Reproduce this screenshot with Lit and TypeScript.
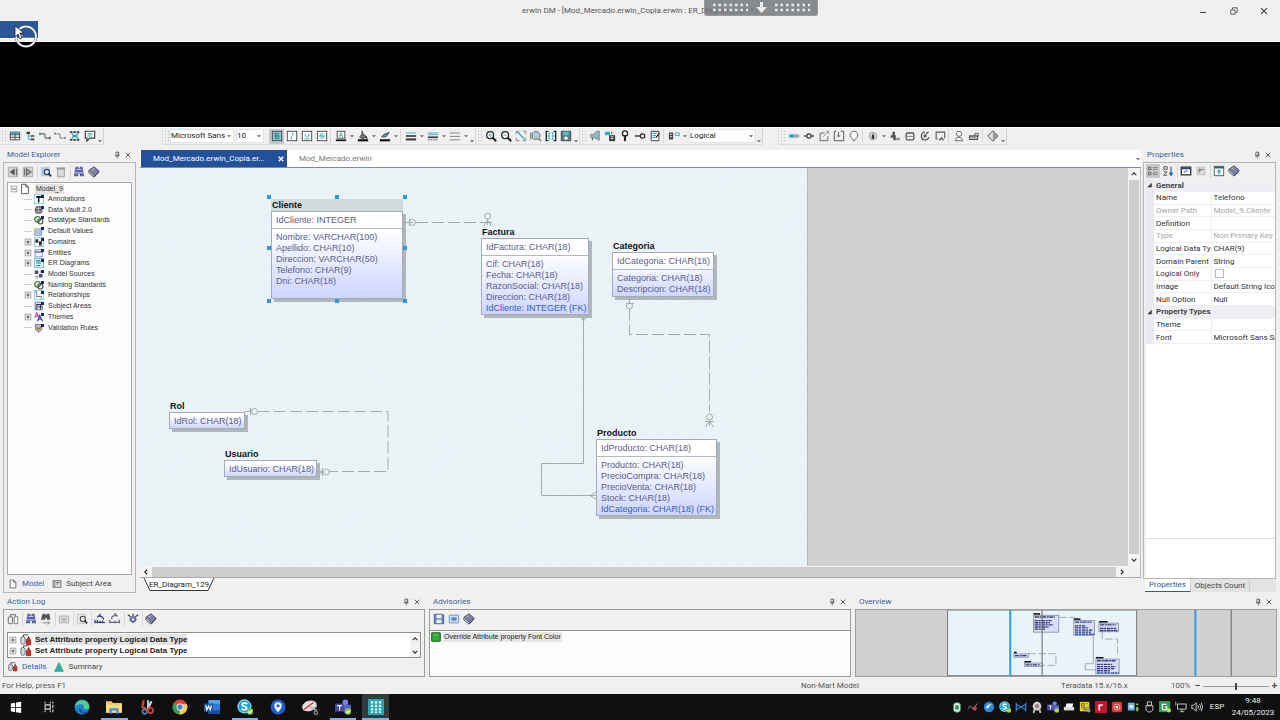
import { LitElement, html, css, svg, nothing } from "lit";
import { customElement, property } from "lit/decorators.js";

const K = "#3b3d40";
const T = "#35a9b5";
const N = "#33417f";

/* Every glyph is drawn on a 14 x 14 grid. */
const glyphs: Record<string, unknown> = {
  table: svg`<path d="M1.5 2.5h11v9h-11zM1 5.5h12M1 8.5h12M7 3v8" fill="none" stroke=${K}/><path d="M2 3h10v2H2z" fill=${T}/>`,
  hier: svg`<path d="M3 2h4v3H3zM8 6h4v2H8zM8 10h4v2H8z" fill=${K}/><path d="M5 5v6h3M5 7h3" fill="none" stroke=${T}/>`,
  link: svg`<path d="M1 3v3M1 4.500h6v5h6M13 8v3M11 9.500l2-1.500" fill="none" stroke=${K}/><path d="M2 4.500h3" stroke=${T}/>`,
  linkdash: svg`<path d="M1 3v3M1 4.500h6v5h6M13 8v3" fill="none" stroke=${K} stroke-dasharray="2 1"/>`,
  many: svg`<path d="M1 2.500h12M1 11.500h12" stroke=${K} stroke-width="2" stroke-dasharray="3 1"/><path d="M3 4l8 6M11 4l-8 6M4 7h6" stroke=${T} stroke-width="1.500"/>`,
  note: svg`<path d="M1.500 1.500h11v8h-6l-3 3.500v-3.500h-2z" fill="#fff" stroke=${K} stroke-width="1.300"/><path d="M4 4.500h6M4 7h5" stroke=${T} stroke-width="1.300"/>`,
  bold: svg`<rect x="1.500" y="1.500" width="11" height="11" fill="#8fc3c9" stroke=${K}/><path d="M5 4v6h3a1.500 1.500 0 0 0 0-3H5h2.500a1.500 1.500 0 0 0 0-3z" fill="none" stroke="#15717c"/>`,
  italic: svg`<rect x="1.500" y="1.500" width="11" height="11" fill="#fff" stroke=${K}/><path d="M7 4h2M5 10h2M8 4l-2 6" stroke=${T} fill="none"/>`,
  under: svg`<rect x="1.500" y="1.500" width="11" height="11" fill="#fff" stroke=${K}/><path d="M5 4v3q2 3 4 0V4M4 10.500h6" stroke=${T} fill="none"/>`,
  strike: svg`<rect x="1.500" y="1.500" width="11" height="11" fill="#fff" stroke=${K}/><path d="M9 4.500H5.500v2.500h3v2.500H5M3 7h8" stroke=${T} fill="none"/>`,
  fontcol: svg`<rect x="2.500" y="1.500" width="9" height="8" fill="#fff" stroke=${K}/><path d="M5 8l2-5 2 5M6 6.500h2" fill="none" stroke=${T}/><path d="M1 12h12" stroke="#111" stroke-width="2"/>`,
  fill: svg`<path d="M3 8l4-4 4 4-3 2H5z" fill="#777" stroke=${K}/><path d="M6 1v5M10 7l2 3" stroke=${K} stroke-width="1.500"/><path d="M1 12h12" stroke="#111" stroke-width="2.500"/>`,
  pen: svg`<path d="M3 8l3-3 6-2-4 5z" fill=${T} stroke=${K}/><path d="M1 12h12" stroke="#111" stroke-width="2.500"/>`,
  lines1: svg`<path d="M1 3.500h12" stroke=${T}/><path d="M1 7h12" stroke=${K} stroke-width="2"/><path d="M1 11h12" stroke=${K} stroke-width="2.500"/>`,
  lines2: svg`<path d="M1 3.500h12M1 5.500h12" stroke=${T}/><path d="M1 8.500h12" stroke=${K} stroke-width="2"/><path d="M1 11.500h12" stroke=${K} stroke-dasharray="2 1"/>`,
  lines3: svg`<path d="M1 3.500h12M1 7.500h12M1 11.500h12" stroke="#777"/>`,
  zoomin: svg`<circle cx="6" cy="6" r="4" fill="#fff" stroke="#222" stroke-width="1.500"/><path d="M4 6h4M6 4v4" stroke=${T}/><path d="M9 9l4 4" stroke="#222" stroke-width="2.500"/>`,
  zoomout: svg`<circle cx="6" cy="6" r="4" fill="#fff" stroke="#222" stroke-width="1.500"/><path d="M4 6h4" stroke=${T}/><path d="M9 9l4 4" stroke="#222" stroke-width="2.500"/>`,
  fit: svg`<path d="M1.500 5V1.500H5M9 1.500h3.500V5M12.500 9v3.500H9M5 12.500H1.500V9" fill="none" stroke="#777"/><path d="M3 2l8 9" stroke=${T} stroke-width="1.500"/>`,
  zoomsel: svg`<circle cx="7" cy="6.500" r="4.500" fill="#d9ecef" stroke="#777" stroke-width="1.500"/><circle cx="7" cy="6.500" r="2" fill="none" stroke=${T}/><path d="M10 10l3 3M1 3v8" stroke="#777" stroke-width="1.500"/>`,
  extent: svg`<path d="M4 1.500H1.500v11H4M10 1.500h2.500v11H10" fill="none" stroke="#222" stroke-width="1.500"/><path d="M4 4h2M8 4h2M3 7h3M8 7h3M4 10h2M8 10h2" stroke=${T} stroke-width="2"/>`,
  disk: svg`<path d="M1.500 1.500h11v11h-11z" fill="#5b7f89" stroke=${K}/><path d="M4 2h6v4H4z" fill="#5cc0cb"/><circle cx="7" cy="9.500" r="2" fill="#fff"/>`,
  horn: svg`<path d="M8 2l4-1v11L6 9H2V5h4z" fill="#8bb7bd" stroke="#888"/><path d="M4 9v3" stroke=${K}/>`,
  tables: svg`<path d="M1 2h6v4H1z" fill=${T}/><path d="M6 6h7v7H6z" fill=${K}/><path d="M8 8h3M8 10h3" stroke="#fff"/><path d="M9 2v3" stroke=${K}/>`,
  key: svg`<circle cx="7" cy="4" r="3" fill="#fff" stroke="#222" stroke-width="1.500"/><path d="M7 6v7" stroke="#222" stroke-width="2.500"/>`,
  keyh: svg`<path d="M1 7h8" stroke="#222" stroke-width="1.500"/><circle cx="10" cy="7" r="2.500" fill="#fff" stroke="#222" stroke-width="1.500"/>`,
  edit: svg`<path d="M2.500 1.500h9v11h-9z" fill="#fff" stroke="#222"/><path d="M4 4h5M4 6.500h4M4 9h3" stroke=${T} stroke-width="1.500"/><path d="M8 9l4-5" stroke="#222" stroke-width="1.500"/>`,
  model: svg`<path d="M1 3h5v8H1z" fill=${K}/><path d="M2 5h3M2 8h3" stroke="#fff"/><path d="M8.500 3.500h5v3h-5z" fill="#fff" stroke=${T}/>`,
  dots: svg`<rect x="1" y="5" width="7" height="4" rx="2" fill=${T}/><rect x="7.500" y="5.500" width="5" height="3" rx="1.500" fill="#bbb" stroke="#888"/>`,
  conn: svg`<path d="M1 7h12" stroke=${K} stroke-width="1.500"/><circle cx="7" cy="7" r="2.500" fill="#fff" stroke=${K} stroke-width="1.500"/>`,
  out: svg`<path d="M8 3.500H2.500v9h9V7" fill="none" stroke="#555"/><path d="M6 8l6-6M9 1.500h3.500V5" fill="none" stroke="#888"/>`,
  inn: svg`<path d="M4 1.500H1.500v11h11v-11H9" fill="none" stroke="#444"/><path d="M6.500 2v6M4.500 6l2 2 2-2" fill="none" stroke="#555"/>`,
  balloon: svg`<path d="M5 10a4.500 4.500 0 1 1 4 0l-2 3z" fill="#fff" stroke="#555"/>`,
  globe: svg`<circle cx="7" cy="7" r="4.500" fill="#ddd" stroke="#999"/><path d="M7 4v4M6 6h2v4H6z" stroke="#444"/>`,
  person: svg`<path d="M4 2h3v4H4zM2 6h6v6H5V9H2z" fill="#555"/><path d="M8 9h5v3H8z" fill="#999"/>`,
  db: svg`<rect x="2.500" y="3.500" width="9" height="8" rx="2" fill="#eee" stroke="#555" stroke-width="1.500"/><path d="M3 7.500h8" stroke="#777"/>`,
  cycle: svg`<path d="M7 2.500a4.500 4.500 0 1 0 4.500 6M8 5l3-3M5 7h4M7 5v4" fill="none" stroke="#555" stroke-width="1.500"/>`,
  screen: svg`<path d="M4 10.500H2.500v-8h10v7" fill="none" stroke="#555" stroke-width="1.300"/><path d="M6 12l3-3 2 3" fill="none" stroke="#555" stroke-width="1.500"/>`,
  user: svg`<circle cx="7" cy="4.500" r="3" fill="#fff" stroke="#555"/><path d="M2.500 12.500q1-4 4.500-4t4.500 4z" fill="#fff" stroke="#555"/>`,
  lock: svg`<path d="M2 7h9v4H2z" fill="#fff" stroke="#555" stroke-width="1.500"/><path d="M8 7V4h4v4M4 9h5" fill="none" stroke="#555"/>`,
  diamond: svg`<path d="M7 1l6 6-6 6-6-6z" fill="#ddd" stroke="#444"/><path d="M7 2v10l5-5z" fill="#999"/>`,
  back: svg`<path d="M1.500 1.500h11v11h-11z" fill="#d6d6d6" stroke="#aaa"/><path d="M9 3v8L3 7z" fill="#555"/><path d="M11 3v8" stroke="#555"/>`,
  fwd: svg`<path d="M1.500 1.500h11v11h-11z" fill="#d6d6d6" stroke="#aaa"/><path d="M5 3v8l6-4z" fill="#999" stroke="#555"/><path d="M3 3v8" stroke="#555"/>`,
  find: svg`<path d="M1 1h10v11H1z" fill="#b9cde8"/><circle cx="8" cy="7" r="3" fill="#e4f0fb" stroke=${N} stroke-width="1.500"/><path d="M10 9l3 3" stroke="#222" stroke-width="2"/>`,
  findgray: svg`<path d="M1.500 1.500h9v11h-9z" fill="#eee" stroke="#bbb"/><circle cx="8" cy="7" r="3" fill="#fff" stroke="#555" stroke-width="1.500"/><path d="M10 9l3 3" stroke="#333" stroke-width="2"/>`,
  trash: svg`<path d="M3 3.500h8v9H3z" fill="#d9d9d9" stroke="#999"/><path d="M2 2.500h10" stroke="#888" stroke-width="1.500"/>`,
  binoc: svg`<path d="M3 1h3l1 3 1-3h3l2 11H8V9H6v3H1z" fill="#5a62a0"/><path d="M2 8h10M4 4h6" stroke="#dfe2f5"/>`,
  book: svg`<path d="M1 5l6-4 6 5-5 6z" fill="#7c7fae" stroke="#3b3d70"/><path d="M1 6v2l6 5 6-6" fill="none" stroke="#333"/><path d="M4 5l3-2" stroke="#c9b36a" stroke-width="1.500"/>`,
  page: svg`<path d="M3 1.500h5l3 3v8H3z" fill="#fff" stroke="#444"/><path d="M8 1.500v3h3" fill="none" stroke="#444"/>`,
  area: svg`<rect x="1.500" y="2.500" width="11" height="9" fill="#dfe3ea" stroke="#444"/><path d="M4 3v8M6 5h5M6 7h3" stroke="#445" />`,
  copy: svg`<rect x="1.500" y="4.500" width="5" height="8" rx="1" fill="#eee" stroke="#555"/><rect x="8.500" y="4.500" width="4" height="8" fill="#fff" stroke="#777"/><path d="M4 4V2h6v2" fill="none" stroke="#555"/>`,
  binocx: svg`<path d="M3 1h3l1 2 1-2h3l1 7H8V6H6v2H1z" fill="#555"/><path d="M3 11.500h8M9 9.500l2 2-2 2" fill="none" stroke="#777"/>`,
  gbox: svg`<rect x="1.500" y="3.500" width="11" height="8" fill="#ddd" stroke="#aaa"/><path d="M4 7h6M5 9h4" stroke="#999"/>`,
  undo: svg`<path d="M4 5l3-3v2q4 0 4 4M1 8v4M4 8v4M7 9v3M10 9v3M1 11h12" fill="none" stroke=${N} stroke-width="1.500"/>`,
  redo: svg`<path d="M10 4L7 1v2q-4 0-4 4M1 8v4M12 8v4M7 9v3M1 11h12" fill="none" stroke="#667" stroke-width="1.500"/>`,
  spider: svg`<path d="M1 2l4 3M7 1v4M13 2L9 5" stroke="#444" stroke-width="1.500"/><path d="M3 6l4-2 4 2v3l-4 3-4-3z" fill="#5b62a5"/><circle cx="7" cy="7.500" r="1.500" fill="#fff"/>`,
  save: svg`<path d="M1.500 1.500h10l1 1v10h-11z" fill="#6d88b5" stroke="#41578a"/><path d="M4 2h6v4H4zM4 8h6v4H4z" fill="#e8eef8"/>`,
  photo: svg`<rect x="1.500" y="2.500" width="11" height="9" rx="1" fill="#cfe4f7" stroke="#5a86bb"/><path d="M4 5h6v4H4z" fill="#5a86bb"/>`,
  cats: svg`<path d="M1.500 2.500h3v3h-3zM1.500 8.500h3v3h-3z" fill="none" stroke="#555"/><path d="M7 3h6M7 5h6M7 9h6M7 11h6" stroke="#555" stroke-dasharray="2 1"/>`,
  az: svg`<path d="M2 2h4v3H2zM2 8h4L2 12h4" fill="none" stroke="#444"/><path d="M10.500 2v9M8.500 9l2 3 2-3" fill="none" stroke="#2d6aa8" stroke-width="1.500"/>`,
  win: svg`<rect x="1.500" y="2.500" width="11" height="9" fill="#fff" stroke="#234" stroke-width="1.500"/><path d="M2 4h10" stroke=${N} stroke-width="2"/><path d="M5 9q0-3 4-2" stroke=${N} fill="none"/>`,
  wingray: svg`<rect x="2.500" y="2.500" width="9" height="9" fill="#ddd" stroke="#bbb"/><path d="M5 9q0-4 5-4M6 4l-2 3" stroke="#888" fill="none" stroke-width="1.500"/>`,
  winup: svg`<rect x="1.500" y="1.500" width="11" height="11" fill="#fff" stroke="#355"/><path d="M2 3h10" stroke="#355" stroke-width="2"/><path d="M7 11V6M5 8l2-2 2 2" stroke=${T} fill="none" stroke-width="1.500"/>`,
  pin: svg`<path d="M5 2h5v6H5zM9 2v6M3.500 8.500h8M7.500 9v4" fill="none" stroke="#444" stroke-width="1.200"/>`,
  close: svg`<path d="M3 3l8 8M11 3l-8 8" stroke="#444" stroke-width="1.500"/>`,
  closew: svg`<path d="M3 3l8 8M11 3l-8 8" stroke="#fff" stroke-width="2.500"/>`,
  up: svg`<path d="M3 9l4-4 4 4" fill="none" stroke="#333" stroke-width="2.200"/>`,
  down: svg`<path d="M3 5l4 4 4-4" fill="none" stroke="#333" stroke-width="2.200"/>`,
  left: svg`<path d="M9 3L5 7l4 4" fill="none" stroke="#333" stroke-width="2.200"/>`,
  right: svg`<path d="M5 3l4 4-4 4" fill="none" stroke="#333" stroke-width="2.200"/>`,
  caret: svg`<path d="M2 5h10L7 10z" fill="#666"/>`,
  plus: svg`<rect x="2" y="2" width="10" height="10" fill="#fff" stroke="#999" stroke-width="1.500"/><path d="M4 7h6M7 4v6" stroke="#333" stroke-width="1.500"/>`,
  minus: svg`<rect x="2" y="2" width="10" height="10" fill="#fff" stroke="#999" stroke-width="1.500"/><path d="M4 7h6" stroke="#333" stroke-width="1.500"/>`,
  tri: svg`<path d="M11 2v10H1z" fill="#333"/>`,
  log: svg`<rect x="1" y="3" width="5" height="9" rx="2" fill="#cfdbe8" stroke="#555"/><path d="M7 6h6v7H7z" fill="#b8322f"/><path d="M8 6l2-4 2 4z" fill="#8f2624"/><path d="M4 3V1h6" stroke="#333" fill="none"/>`,
  peak: svg`<path d="M7 1l6 12H1z" fill="#2fb9a4" stroke="#27897b"/>`,
  green: svg`<rect x="1" y="1" width="12" height="12" rx="1" fill="#2fae3b" stroke="#1b5f22" stroke-width="1.500"/><path d="M3 4h6" stroke="#8be08f"/>`,
  min: svg`<path d="M3 9h8" stroke="#333" stroke-width="1.500"/>`,
  restore: svg`<path d="M2.500 5.500h6v6h-6zM5 5V2.500h6.500V9H9" fill="none" stroke="#333"/>`,
  /* model tree */
  tText: svg`<rect x=".5" y=".5" width="13" height="13" fill="#fff" stroke="#5cc2e0"/><path d="M3 4h7M6.500 4v8" stroke="#111" stroke-width="2.200"/>`,
  tVault: svg`<circle cx="6.500" cy="7" r="5.500" fill="#666"/><path d="M3 5h7M3 9h7M6 2v10" stroke="#ccc"/>`,
  tChain: svg`<circle cx="5" cy="6" r="4" fill="#cfe3c8" stroke="#3f7a3d" stroke-width="1.500"/><circle cx="9" cy="9" r="3.500" fill="none" stroke="#444" stroke-width="1.500"/>`,
  tDef: svg`<rect x="1" y="4" width="10" height="9" fill="#a9c4ea" stroke="#6f8fc4"/><path d="M1 3h5v3H1z" fill="#e3c680"/>`,
  tDom: svg`<rect x=".5" y=".5" width="13" height="13" fill="#fff" stroke="#5cc2e0"/><path d="M2 3h4v5H2zM7 6h4v6H7z" fill="#333"/>`,
  tEnt: svg`<rect x="1.500" y="2.500" width="10" height="10" fill="#f3f4ff" stroke="#6668b0"/><path d="M1 5.500h11" stroke="#6668b0" stroke-width="2"/>`,
  tEr: svg`<rect x=".5" y=".5" width="13" height="13" fill="#dff8fb" stroke="#37b6cf"/><path d="M3 4h6M3 7h7M3 10.500h6" stroke="#127c92" stroke-width="1.500"/>`,
  tSrc: svg`<path d="M1 2h5v5H1zM7 7h5v5H7z" fill="#4b5287"/><path d="M2 9h4v4H2zM8 3h4v3H8z" fill="#a4a9cf"/>`,
  tRel: svg`<rect x=".5" y=".5" width="13" height="13" fill="#fff" stroke="#5cc2e0"/><path d="M2 3h2M4 5v4h6v3" fill="none" stroke="#245" stroke-dasharray="2 1" stroke-width="1.500"/>`,
  tArea: svg`<rect x="1.500" y="1.500" width="10" height="11" fill="#dde3f3" stroke="#4a5788"/><path d="M4 12V5h5v7M6 8h5" fill="none" stroke="#334" stroke-width="1.500"/>`,
  tTheme: svg`<path d="M1 8l3-7 3 7M2 6h4" fill="none" stroke="#c04cae" stroke-width="1.500"/><path d="M5 13l3-8 4 8M6 10h5" fill="none" stroke="#3d4aa8" stroke-width="1.800"/>`,
  tRule: svg`<path d="M2 2h9v7l-4 4-5-4z" fill="#bbb7c9" stroke="#555"/><path d="M4 6l2 3 5-5" fill="none" stroke="#a8762b" stroke-width="1.800"/>`,
  /* taskbar */
  windows: svg`<path d="M1 3l5-1v5H1zM7 1.800L13 1v6H7zM1 8h5v5l-5-1zM7 8h6v6l-6-.8z" fill="#fff"/>`,
  taskview: svg`<path d="M2.500 4.500h6v5h-6zM2.500 1v2M8.500 1v2M2.500 11v2M8.500 11v2M11.500 1v2M11.500 4.500v4M11.500 10v3" fill="none" stroke="#ddd" stroke-width="1.300"/>`,
  edge: svg`<circle cx="7" cy="7" r="6.500" fill="#1c84cf"/><path d="M.6 7A6.500 6.500 0 0 1 13.400 6q.4 3-3.400 3-2 0-1.500-1.500Q9 4.500 6 4.500 2 4.500.6 7z" fill="#4fd08c"/><path d="M5 8q0 4 5 4 1 0 2-.8" stroke="#0d4f92" stroke-width="1.500" fill="none"/>`,
  folder: svg`<path d="M0 2h5l1 1.500h8V12H0z" fill="#f2c75c"/><path d="M0 5h14v7H0z" fill="#fbdc83"/><path d="M3 13V8h8v5H9v-3H5v3z" fill="#3f8fd0"/>`,
  snip: svg`<path d="M4 1l-1 6 4 2" stroke="#d2402e" stroke-width="2" fill="none"/><path d="M8 1v9M11 2L8 8" stroke="#c9d2dc" stroke-width="1.800"/><circle cx="5" cy="11" r="2" fill="none" stroke="#4d7fb5" stroke-width="1.500"/><circle cx="10" cy="10" r="2.300" fill="none" stroke="#d2402e" stroke-width="1.500"/>`,
  chrome: svg`<circle cx="7" cy="7" r="6.500" fill="#e2463a"/><path d="M7 7L1.400 3.700A6.500 6.500 0 0 0 6.500 13.500z" fill="#2fa351"/><path d="M7 7l-.5 6.500A6.500 6.500 0 0 0 13 4.500H7z" fill="#f8cf3c"/><circle cx="7" cy="7" r="3" fill="#fff"/><circle cx="7" cy="7" r="2.300" fill="#3f7fe6"/>`,
  word: svg`<path d="M4 1h10v12H4z" fill="#2f7cd6"/><path d="M4 1h10v3H4z" fill="#55abee"/><path d="M4 10h10v3H4z" fill="#1a4a9c"/><path d="M0 4h8v7H0z" fill="#1b55b4"/><path d="M1.500 5.500l1 4 1.500-3.500 1.500 3.500 1-4" stroke="#fff" fill="none"/>`,
  skype: svg`<circle cx="6.500" cy="6.500" r="6.200" fill="#7fd3ef"/><circle cx="6.500" cy="6.500" r="5" fill="#149fd8"/><path d="M9 4.500Q6.500 2.500 4.500 4.500 4.500 6 6.500 6.500 9 7 8.500 8.500 6.500 10.500 4 8.500" stroke="#fff" stroke-width="1.500" fill="none"/><circle cx="11.500" cy="11" r="2.800" fill="#8cc63e"/><path d="M10 11l1 1 2-2" stroke="#fff" fill="none"/>`,
  maps: svg`<circle cx="7" cy="7" r="6.500" fill="#1f5fd0"/><path d="M7 11.500Q3.800 8 3.800 6a3.200 3.200 0 0 1 6.400 0Q10.200 8 7 11.500z" fill="#fff"/><circle cx="7" cy="6" r="1.500" fill="#1f5fd0"/>`,
  cut: svg`<ellipse cx="6.500" cy="6" rx="6.500" ry="4.500" fill="#e6dede" transform="rotate(-20 6.500 6)"/><path d="M2 9l8-6" stroke="#c33" stroke-width="1.200"/><path d="M7 7l6 3M8 10l5-4" stroke="#a9b3bd" stroke-width="1.300"/><circle cx="12" cy="12" r="1.500" fill="none" stroke="#999"/>`,
  teams: svg`<circle cx="9" cy="3" r="2.500" fill="#7b83eb"/><path d="M5 5h9v6q-3 3-6 1z" fill="#5a62c4"/><path d="M0 4h7.500v7H0z" fill="#434aa8"/><path d="M2 5.800h4M4 6v4" stroke="#fff"/><circle cx="11.500" cy="11" r="2.800" fill="#8cc63e"/><path d="M10 11l1 1 2-2" stroke="#fff" fill="none"/>`,
  erwin: svg`<rect width="14" height="14" fill="#21a9b8"/><path d="M3.500 2v10M7 2v10M10.500 2v10" stroke="#fff" stroke-width="2" stroke-dasharray="2 1"/>`,
  batt: svg`<rect x="3" y="2" width="8" height="11" rx="3" fill="#e4efe8" stroke="#3a9560"/><path d="M5 5h4v5H5z" fill="#2d8a51"/>`,
  spark: svg`<path d="M1 9l3-3 3 3 5-6" stroke="#aaa" fill="none"/><circle cx="9" cy="9" r="2.500" fill="#c33c4b"/>`,
  orb: svg`<circle cx="7" cy="7" r="6" fill="#2f86d9"/><path d="M3 9q1-6 8-5-3 0-4 4z" fill="#d6ecff"/>`,
  bow: svg`<path d="M1.500 2v10M12.500 2v10M2 4l5 3 5-3M2 10l5-3 5 3" stroke="#3d7cc9" stroke-width="1.500" fill="none"/>`,
  rosette: svg`<circle cx="7" cy="6" r="5" fill="#d8cfd2"/><circle cx="7" cy="6" r="2.500" fill="#a08088"/><path d="M4 10l-1 4M10 10l1 4" stroke="#ccc" stroke-width="2"/>`,
  printer: svg`<path d="M4 3h8l-1 4H3z" fill="#fff"/><path d="M1 7h12v4H1z" fill="#d8dfd8"/>`,
  yellow: svg`<rect x="1" y="1" width="11" height="11" fill="#e6cf2b"/><path d="M3 3h3v3H3zM8 3h2M3 8h7M5 10h4" stroke="#554" fill="none"/><circle cx="11" cy="11" r="2.500" fill="#999"/>`,
  red: svg`<rect x="0" y="0" width="14" height="14" fill="#c4122f"/><path d="M5 11V4M5 6q1-2 4-1" stroke="#fff" stroke-width="2" fill="none"/>`,
  target: svg`<rect x="1" y="1" width="12" height="12" rx="2" fill="#d43a3a"/><circle cx="7" cy="7" r="3.500" fill="none" stroke="#f6b9b0"/><circle cx="7" cy="7" r="1.500" fill="#fff"/>`,
  cube: svg`<rect x="1" y="2" width="8" height="9" fill="#7db2dd"/><path d="M3 5h4v3H3z" fill="#e8f4ff"/><path d="M12 3v2M12 7v5" stroke="#8ac741" stroke-width="2.500"/>`,
  usb: svg`<path d="M5 1h5v4H5zM3.500 5.500h8v5q-4 5-8 0z" fill="none" stroke="#ddd"/>`,
  greenf: svg`<rect x="0" y="0" width="13" height="13" fill="#2f9b57"/><path d="M9 4H4v6h5V7H7" stroke="#fff" fill="none" stroke-width="1.500"/><circle cx="11.500" cy="11" r="2.500" fill="#b6e35b"/>`,
  net: svg`<path d="M3 3.500h10v6H3zM1 1v4M6 12.500h5M8 10v2" fill="none" stroke="#ddd"/>`,
  vol: svg`<path d="M1 5h2l3-3v10L3 9H1zM8 5q1.500 2 0 4M10 3.500q3 3.500 0 7M12 2q3 5 0 10" fill="none" stroke="#ddd"/>`,
};

const icon = (name: string, cls = "i12") =>
  html`<svg class=${cls} viewBox="0 0 14 14" aria-hidden="true">${glyphs[name]}</svg>`;

interface Entity {
  name: string;
  x: number;
  y: number;
  w: number;
  h: number;
  keys: string[];
  attrs: string[];
  selected?: boolean;
}

const entities: Entity[] = [
  { name: "Cliente", x: 131, y: 43, w: 132, h: 88, selected: true, keys: ["IdCliente: INTEGER"],
    attrs: ["Nombre: VARCHAR(100)", "Apellido: CHAR(10)", "Direccion: VARCHAR(50)", "Telefono: CHAR(9)", "Dni: CHAR(18)"] },
  { name: "Factura", x: 341, y: 70, w: 108, h: 77, keys: ["IdFactura: CHAR(18)"],
    attrs: ["Cif: CHAR(18)", "Fecha: CHAR(18)", "RazonSocial: CHAR(18)", "Direccion: CHAR(18)", "IdCliente: INTEGER (FK)"] },
  { name: "Categoria", x: 472, y: 84, w: 102, h: 45, keys: ["IdCategoria: CHAR(18)"],
    attrs: ["Categoria: CHAR(18)", "Descripcion: CHAR(18)"] },
  { name: "Rol", x: 29, y: 244, w: 76, h: 17, keys: ["IdRol: CHAR(18)"], attrs: [] },
  { name: "Usuario", x: 84, y: 292, w: 93, h: 17, keys: ["IdUsuario: CHAR(18)"], attrs: [] },
  { name: "Producto", x: 456, y: 271, w: 121, h: 77, keys: ["IdProducto: CHAR(18)"],
    attrs: ["Producto: CHAR(18)", "PrecioCompra: CHAR(18)", "PrecioVenta: CHAR(18)", "Stock: CHAR(18)", "IdCategoria: CHAR(18) (FK)"] },
];

@customElement("er-entity")
class ErEntity extends LitElement {
  @property({ attribute: false }) data!: Entity;

  static styles = css`
    :host { position: absolute; display: block; font: 9px/11px "Liberation Sans", Arial, sans-serif; color: #5c5c8c; white-space: nowrap; }
    .name { position: absolute; left: 0; right: 0; bottom: 100%; height: 12px; line-height: 12px; padding-left: 1px; font-weight: bold; color: #111; }
    .name.sel { background: #d3dadb; }
    .box { box-sizing: border-box; height: 100%; border: 1px solid #a3acb6; background: linear-gradient(#fff 20%, #cdd6ff); box-shadow: 3px 3px 0 #b0b6bb; }
    .keys { padding: 3px 4px 2px; }
    .attrs { border-top: 1px solid #b4bac2; padding: 3px 4px 0; }
    .fk { color: #355fb5; }
    .h { position: absolute; width: 4px; height: 4px; background: #2f9ad6; }
    .t { top: -16px; } .m { top: 35px; } .b { bottom: -4px; }
    .l { left: -4px; } .c { left: calc(50% - 2px); } .r { right: -4px; }
  `;

  render() {
    const e = this.data;
    return html`
      <div class="name ${e.selected ? "sel" : ""}">${e.name}</div>
      <div class="box">
        <div class="keys">${e.keys.map((k) => html`<div>${k}</div>`)}</div>
        ${e.attrs.length
          ? html`<div class="attrs">${e.attrs.map((a) => html`<div class=${a.endsWith("(FK)") ? "fk" : ""}>${a}</div>`)}</div>`
          : nothing}
      </div>
      ${e.selected
        ? ["t l", "t c", "t r", "m l", "m r", "b l", "b c", "b r"].map((p) => html`<i class="h ${p}"></i>`)
        : nothing}
    `;
  }
}

const tree: [string, string, boolean][] = [
  ["Annotations", "tText", false],
  ["Data Vault 2.0", "tVault", false],
  ["Datatype Standards", "tChain", false],
  ["Default Values", "tDef", false],
  ["Domains", "tDom", true],
  ["Entities", "tEnt", true],
  ["ER Diagrams", "tEr", true],
  ["Model Sources", "tSrc", false],
  ["Naming Standards", "tChain", false],
  ["Relationships", "tRel", true],
  ["Subject Areas", "tArea", false],
  ["Themes", "tTheme", true],
  ["Validation Rules", "tRule", false],
];

const general: [string, string, boolean?][] = [
  ["Name", "Telefono"],
  ["Owner Path", "Model_9.Cliente", true],
  ["Definition", ""],
  ["Type", "Non Primary Key", true],
  ["Logical Data Typ", "CHAR(9)"],
  ["Domain Parent", "String"],
  ["Logical Only", "[]"],
  ["Image", "Default String Icon"],
  ["Null Option", "Null"],
];
const types: [string, string, boolean?][] = [
  ["Theme", ""],
  ["Font", "Microsoft Sans Se"],
];

@customElement("app-root")
class AppRoot extends LitElement {
  static styles = css`
    :host { display: flex; flex-direction: column; height: 100vh; overflow: hidden; position: relative; background: #f0f0f0; color: #444; font: 8px/12px Roboto, "Open Sans", sans-serif; }
    * { box-sizing: border-box; }
    svg { display: block; flex: none; }
    button { appearance: none; border: 0; padding: 0; margin: 0; background: none; font: inherit; color: inherit; display: flex; align-items: center; justify-content: center; }
    .i6 { width: 6px; height: 6px; }
    .i8 { width: 8px; height: 8px; }
    .i10 { width: 10px; height: 10px; }
    .i12 { width: 12px; height: 12px; }
    .i16 { width: 16px; height: 16px; }
    .grow { flex: 1; min-width: 0; }

    .title { display: grid; grid-template-columns: 1fr auto 1fr; align-items: center; height: 21px; flex: none; }
    .title .txt { white-space: nowrap; color: #555; }
    .winbtns { display: flex; justify-content: flex-end; padding-right: 6px; }
    .winbtns button { width: 31px; height: 21px; }
    .winbtns button:last-child { width: 20px; margin-left: 5px; }
    .grab { position: absolute; left: 55%; top: 0; width: 114px; height: 16px; border-radius: 0 0 3px 3px; background: rgba(112, 116, 120, 0.82); border: 1px solid #999; border-top: 0; display: flex; align-items: center; justify-content: center; }
    .menu { height: 21px; flex: none; border-bottom: 1px solid #fff; }
    .menu button { width: 38px; height: 18px; background: #2b5797; border-bottom: 1px solid #fff; }
    .cursor { position: absolute; left: 12px; top: 24px; width: 28px; height: 26px; }
    .band { height: 85px; flex: none; background: #000; }

    .toolbars { display: flex; height: 19px; flex: none; border-top: 1px solid #fff; }
    .tb { display: flex; align-items: center; height: 17px; border-right: 1px solid #d4d4d4; border-bottom: 1px solid #dcdcdc; }
    .far { margin-left: 58px; border-left: 1px solid #ddd; }
    .near { margin-left: 15px; border-left: 1px solid #ddd; }
    .grip { width: 5px; height: 13px; margin: 0 1px; flex: none; background: radial-gradient(#b5b5b5 1px, transparent 1px) 0 0 / 3px 3px; }
    .tb button { width: 15px; height: 15px; flex: none; }
    .tb button.car { width: 7px; }
    .tb button.more { width: 6px; align-items: flex-end; }
    .tb button.on { background: #c6c8ca; }
    .sep { width: 1px; height: 14px; margin: 0 2px 0 1px; background: #d6d6d6; flex: none; }
    .combo { display: flex; align-items: center; height: 14px; background: #fff; border: 1px solid #e2e2e2; margin-right: 2px; color: #222; }
    .combo select { appearance: none; border: 0; background: none; font: inherit; color: inherit; padding: 0; margin: 0; flex: 1; min-width: 0; height: 12px; }
    .combo .i6 { margin: 0 1px; pointer-events: none; }
    .w64 { width: 64px; } .w28 { width: 28px; margin-right: 5px; } .w67 { width: 67px; margin: 0 0 0 1px; }

    .main { display: flex; flex: 1; min-height: 0; }
    .side { display: flex; flex-direction: column; flex: none; min-width: 0; }
    .head { display: flex; align-items: center; height: 16px; flex: none; padding: 2px 4px 0; color: #3f5f97; gap: 2px; }
    .head h2 { font: inherit; margin: 0; flex: 1; }
    .head button { width: 9px; height: 12px; }
    .frame { display: flex; flex-direction: column; flex: 1; min-height: 0; border: 1px solid #b5b5b5; }
    .tools { display: flex; align-items: center; gap: 1px; height: 17px; flex: none; padding-left: 2px; }
    .tools button { width: 14px; height: 14px; }
    .tools .sep { margin: 0 0 0 1px; }

    .explorer { width: 137px; padding: 0 1px 0 3px; }
    .tree { flex: 1; min-height: 0; margin: 2px 3px 0; border: 1px solid #a9a9a9; background: #fcfcfc; font: 7px/10px "Liberation Sans", Arial, sans-serif; overflow: hidden; }
    .tree ul { list-style: none; margin: 0; padding: 0; display: grid; grid-auto-rows: 1fr; height: 150px; }
    .tree li { display: grid; grid-template-columns: 11px 13px 14px auto; align-items: center; justify-content: start; min-height: 0; padding-left: 2px; color: #333; }
    .tree li.root { grid-template-columns: 9px 16px auto; }
    .tree li.root span { background: #e2e2e2; padding: 0 1px; }
    .tree li:not(.root) > :first-child { grid-column: 2; justify-self: start; margin-left: 3px; }
    .tree .stub { width: 8px; height: 1px; background: #ccc; }
    .badge { position: relative; width: 10px; height: 10px; }
    .badge::after { content: ""; position: absolute; right: 0; top: 1px; width: 3px; height: 3px; background: #23246e; }
    .foot { display: flex; align-items: center; height: 17px; flex: none; gap: 8px; padding-left: 4px; }
    .foot button { gap: 4px; }
    .foot .cur { color: #3558c8; }

    .center { display: flex; flex-direction: column; flex: 1; min-width: 0; padding: 4px 2px 2px 3px; }
    .tabs { display: flex; align-items: center; height: 18px; flex: none; background: #fff; border-bottom: 1px solid #7d8c98; padding-left: 1px; }
    .tabs .doc { height: 17px; padding: 0 12px; color: #777; }
    .tabs .doc.cur { width: 146px; padding: 0 2px 0 12px; background: #22509a; color: #fff; justify-content: space-between; }
    .tabs .doc .i8 { margin-right: 0; }
    .view { display: grid; grid-template-columns: 1fr 12px; grid-template-rows: 1fr 11px; flex: 1; min-height: 0; border-right: 1px solid #bbb; border-bottom: 1px solid #aaa; }
    .canvas { position: relative; overflow: hidden; background: #d1d1d1; }
    .paper { position: relative; width: 668px; height: 100%; border-right: 1px solid #b5babd; background: repeating-linear-gradient(45deg, rgba(255, 255, 255, 0.25) 0 1px, transparent 1px 3px), repeating-linear-gradient(-45deg, rgba(200, 222, 230, 0.2) 0 1px, transparent 1px 3px), #eaf3f7; }
    .wires { position: absolute; left: 0; top: 0; width: 668px; height: 397px; }
    .vs { display: flex; flex-direction: column; align-items: center; background: #f4f4f4; }
    .hs { display: flex; align-items: center; background: #f4f4f4; }
    .vs button, .hs button { width: 12px; height: 12px; flex: none; }
    .vs i { flex: 1; width: 10px; background: #cdcdcd; }
    .hs i { flex: 1; height: 10px; background: #cdcdcd; }
    .sheets { height: 13px; flex: none; display: flex; padding-left: 3px; }
    .sheet { position: relative; width: 72px; height: 13px; color: #222; }
    .sheet svg { position: absolute; inset: 0; width: 72px; height: 13px; }
    .sheet span { position: relative; }

    .props { width: 137px; padding-right: 4px; }
    .props .tools { height: 16px; }
    .props .tools .on { background: #c9c9c9; }
    .gridbox { flex: 1; min-height: 0; background: #fff; margin-left: 2px; overflow: hidden; }
    table { border-collapse: collapse; table-layout: fixed; width: 100%; height: 165px; color: #333; }
    th, td { padding: 0 0 0 2px; text-align: left; font-weight: normal; white-space: nowrap; overflow: hidden; border-bottom: 1px solid #efeff2; line-height: 11px; height: 12px; }
    td { border-left: 1px solid #efeff2; }
    tr.sec th { font-weight: bold; background: #efeff3; color: #444; }
    th.g, tr.sec th.g { background: #e9e9ef; border-bottom-color: #e9e9ef; padding: 0 0 0 1px; }
    tr.dim { color: #a6a6a6; }
    td input { appearance: none; width: 9px; height: 9px; border: 1px solid #bbb; background: #fff; margin: 0 0 0 1px; display: block; }
    .ptabs { display: flex; height: 13px; flex: none; margin: 0 0 1px 2px; background: #e3e3e3; }
    .ptabs button { padding: 0 4px; border-right: 1px solid #ccc; }
    .ptabs .cur { background: #fff; color: #2f5a9a; border-bottom: 1px solid #2f5a9a; }
    .desc { height: 40px; flex: none; background: #fff; border-top: 1px solid #ddd; margin-left: 2px; }

    .bottom { display: grid; grid-template-columns: repeat(3, minmax(0, 1fr)); gap: 4px; padding: 0 3px; height: 83px; flex: none; }
    .bottom section { display: flex; flex-direction: column; min-width: 0; }
    .bottom .frame { border-color: #9d9d9d; }
    .loglist { display: flex; height: 26px; margin: 5px 3px 0; border: 1px solid #8f8f8f; background: #fff; font: bold 8px/11px "Liberation Sans", Arial, sans-serif; color: #222; }
    .loglist ul { list-style: none; margin: 0; padding: 1px 0 0 1px; flex: 1; }
    .loglist li { display: flex; align-items: center; gap: 3px; height: 11px; }
    .loglist li:first-child span { background: #e4e4e4; }
    .loglist .sb { display: flex; flex-direction: column; justify-content: space-between; background: #f2f2f2; }
    .loglist .sb button { width: 10px; height: 11px; }
    .adv { flex: 1; background: #fcfcfc; border-top: 1px solid #8f8f8f; margin-top: 3px; padding: 1px; font: 7px/10px "Liberation Sans", Arial, sans-serif; color: #222; }
    .adv div { display: flex; align-items: center; gap: 2px; }
    .adv span { background: #e6e6e6; padding: 0 1px; }
    .over { flex: 1; min-height: 0; background: #d1d1d1; }
    .over svg { width: 100%; height: 100%; }

    .status { display: flex; align-items: center; height: 18px; flex: none; padding: 2px 3px 0 2px; color: #555; }
    .status .mart { width: 260px; }
    .status .tera { width: 110px; }
    .status .pct { width: 24px; }
    .zoom { width: 82px; display: flex; align-items: center; }
    .zoom input { appearance: none; flex: 1; min-width: 0; height: 8px; margin: 0 3px; background: linear-gradient(#999, #999) center / 100% 1px no-repeat; }
    .zoom input::-webkit-slider-thumb { appearance: none; width: 2px; height: 7px; background: #444; }
    .zoom button { width: 5px; height: 10px; font-size: 10px; font-weight: bold; }

    .task { display: flex; height: 26px; flex: none; background: #101010; color: #eee; }
    .apps { display: grid; grid-template-columns: repeat(12, 1fr); width: 392px; flex: none; }
    .apps button { border-bottom: 2px solid transparent; border-top: 2px solid transparent; margin: 0 3px; }
    .apps .run { border-bottom-color: #7fb2e3; }
    .apps .act { background: #343a3c; border-top-color: #343a3c; }
    .tray { display: flex; margin-left: auto; align-items: center; }
    .tray button { width: 16px; height: 26px; }
    .tray .lang { width: 24px; margin-right: 2px; }
    .clock { width: 44px; text-align: center; margin-right: 5px; white-space: nowrap; }
  `;

  private btn(name: string, cls = "", size = "i12") {
    return html`<button class=${cls} aria-label=${name}>${icon(name, size)}</button>`;
  }
  private set(...names: string[]) {
    return names.map((n) => (n === "|" ? html`<i class="sep"></i>` : this.btn(n)));
  }
  private pair(name: string) {
    return html`${this.btn(name)}${this.btn("caret", "car", "i6")}`;
  }
  private more() {
    return this.btn("caret", "more", "i6");
  }
  private head(text: string) {
    return html`<header class="head"><h2>${text}</h2>${this.btn("pin", "", "i8")}${this.btn("close", "", "i8")}</header>`;
  }

  private toolbars() {
    return html`<div class="toolbars">
      <div class="tb"><i class="grip"></i>${this.set("table", "hier", "link", "linkdash", "many", "note")}${this.more()}</div>
      <div class="tb far">
        <i class="grip"></i>
        <label class="combo w64"><select aria-label="Font"><option>Microsoft Sans</option></select>${icon("caret", "i6")}</label>
        <label class="combo w28"><select aria-label="Size"><option>10</option></select>${icon("caret", "i6")}</label>
        ${this.btn("bold", "on")}${this.set("italic", "under", "strike", "|")}
        ${this.pair("fontcol")}${this.pair("fill")}${this.pair("pen")}<i class="sep"></i>
        ${this.pair("lines1")}${this.pair("lines2")}${this.pair("lines3")}${this.more()}
      </div>
      <div class="tb"><i class="grip"></i>${this.set("zoomin", "zoomout", "fit", "zoomsel", "extent", "disk")}${this.more()}</div>
      <div class="tb">
        <i class="grip"></i>${this.set("horn", "tables", "key", "keyh", "edit", "|")}${this.pair("model")}
        <label class="combo w67"><select aria-label="View"><option>Logical</option></select>${icon("caret", "i6")}</label>
        ${this.more()}
      </div>
      <div class="tb near">
        <i class="grip"></i>${this.set("dots", "conn", "out", "inn", "balloon", "|")}${this.pair("globe")}
        ${this.set("person", "db", "cycle", "screen", "|", "user", "lock", "|", "diamond")}${this.more()}
      </div>
    </div>`;
  }

  private explorer() {
    return html`<aside class="side explorer">
      ${this.head("Model Explorer")}
      <div class="frame">
        <div class="tools">${this.set("back", "fwd", "|", "find", "trash", "|", "binoc", "book")}</div>
        <div class="tree">
          <ul>
            <li class="root">${icon("minus", "i8")}${icon("page", "i12")}<span>Model_9</span></li>
            ${tree.map(([label, glyph, kids]) => html`<li>
              ${kids ? icon("plus", "i8") : html`<i class="stub"></i>`}
              <i class="badge">${icon(glyph, "i10")}</i><span>${label}</span>
            </li>`)}
          </ul>
        </div>
        <div class="foot">
          <button class="cur">${icon("page", "i10")}Model</button>
          <button>${icon("area", "i10")}Subject Area</button>
        </div>
      </div>
    </aside>`;
  }

  private wires() {
    return svg`
      <g fill="none" stroke="#a2abb0">
        <path d="M263 54.500h10M276 54.500h68" stroke-dasharray="12 4"/>
        <circle cx="272.500" cy="54.500" r="3"/><path d="M269.500 51v7"/>
        <circle cx="347.500" cy="48" r="3"/><path d="M347.500 51v6M347.500 52l-4 6M347.500 52l4 6M343 54.500h9"/>
        <path d="M489.500 129v6M486 135.500h8M489.500 141v25.500h80v77" stroke-dasharray="12 4"/>
        <circle cx="489.500" cy="138" r="3"/>
        <circle cx="569.500" cy="249" r="3"/><path d="M569.500 252v6M569.500 253l-4 6M569.500 253l4 6M565 253.500h9"/>
        <path d="M443.500 148v147.500h-42v32h55M440 148l3.500 5 3.500-5M456 324l-6 3.500 6 3.500"/>
        <path d="M105 243.500h7M110.500 240v7"/><circle cx="114.500" cy="243.500" r="3"/>
        <path d="M118 243.500h130v60h-59" stroke-dasharray="12 4"/>
        <circle cx="186.500" cy="304" r="3"/><path d="M182.500 300v8M177 304h6M177 300l5 4-5 4"/>
      </g>`;
  }

  private center() {
    return html`<main class="center">
      <nav class="tabs">
        <button class="doc cur">Mod_Mercado.erwin_Copia.er...${icon("closew", "i8")}</button>
        <button class="doc">Mod_Mercado.erwin</button>
        <span class="grow"></span>${this.btn("caret", "", "i6")}
      </nav>
      <div class="view">
        <div class="canvas">
          <div class="paper">
            ${entities.map((e) => html`<er-entity .data=${e} style="left:${e.x}px;top:${e.y}px;width:${e.w}px;height:${e.h}px"></er-entity>`)}
            <svg class="wires" viewBox="0 0 668 397">${this.wires()}</svg>
          </div>
        </div>
        <div class="vs">${this.btn("up", "", "i8")}<i></i>${this.btn("down", "", "i8")}</div>
        <div class="hs">${this.btn("left", "", "i8")}<i></i>${this.btn("right", "", "i8")}</div>
      </div>
      <div class="sheets">
        <button class="sheet">
          <svg viewBox="0 0 72 13"><path d="M1 0l6 12.500h58L71 0" fill="#fff" stroke="#333"/></svg>
          <span>ER_Diagram_129</span>
        </button>
      </div>
    </main>`;
  }

  private row([k, v, dim]: [string, string, boolean?]) {
    return html`<tr class=${dim ? "dim" : ""}>
      <th class="g"></th><th scope="row">${k}</th>
      <td>${v === "[]" ? html`<input type="checkbox" aria-label=${k} />` : v}</td>
    </tr>`;
  }
  private section(name: string) {
    return html`<tr class="sec"><th class="g">${icon("tri", "i6")}</th><th colspan="2">${name}</th></tr>`;
  }

  private props() {
    return html`<aside class="side props">
      ${this.head("Properties")}
      <div class="frame">
        <div class="tools">
          ${this.btn("cats", "on")}${this.btn("az")}<i class="sep"></i>${this.set("win", "wingray", "|", "winup", "book")}
        </div>
        <div class="gridbox">
          <table>
            <colgroup><col style="width:8px" /><col style="width:57px" /><col /></colgroup>
            <tbody>
              ${this.section("General")}${general.map((r) => this.row(r))}
              ${this.section("Property Types")}${types.map((r) => this.row(r))}
            </tbody>
          </table>
        </div>
        <div class="desc"></div>
      </div>
      <div class="ptabs"><button class="cur">Properties</button><button>Objects Count</button></div>
    </aside>`;
  }

  private overview() {
    return svg`
      <rect x="92" y="0" width="190" height="66" fill="#e8f4f8" stroke="#777"/>
      <g transform="translate(153 -3) scale(.193)">
        <g fill="none" stroke="#8d979d" stroke-width="4">
          <path d="M263 54h85M489 129v38h80v77M105 243h143v61h-70" stroke-dasharray="40 12"/>
          <path d="M443 148v147h-42v32h55"/>
        </g>
        ${entities.map((e) => svg`
          <rect x=${e.x} y=${e.y} width=${e.w} height=${e.h} fill="#d7defa" stroke="#7f86a8" stroke-width="4"/>
          <path d="M${e.x} ${e.y - 7}h${e.name.length * 5}" stroke="#111" stroke-width="8"/>
          <path d="M${e.x + 6} ${e.y + 9}h${e.w * 0.8}" stroke="#3c3f77" stroke-width="7" stroke-dasharray="22 4 9 3"/>
          ${e.attrs.map((a, i) => svg`<path d="M${e.x + 6} ${e.y + 28 + i * 11}h${a.length * 4.4}" stroke=${a.endsWith("(FK)") ? "#2c55ad" : "#35397a"} stroke-width="7" stroke-dasharray="18 3 11 4"/>`)}
        `)}
      </g>
      <path d="M187 0v66M377 0v66" stroke="#666"/>
      <path d="M155 0v66M341 0v66" stroke="#2f9ede" stroke-width="2"/>`;
  }

  private bottom() {
    const entry = "Set Attribute property Logical Data Type";
    return html`<div class="bottom">
      <section>
        ${this.head("Action Log")}
        <div class="frame">
          <div class="tools">${this.set("copy", "|", "binoc", "binocx", "|", "gbox", "|", "findgray", "|", "undo", "redo", "|", "spider", "|", "book")}</div>
          <div class="loglist">
            <ul>${[0, 1].map(() => html`<li>${icon("plus", "i8")}${icon("log", "i12")}<span>${entry}</span></li>`)}</ul>
            <div class="sb">${this.btn("up", "", "i8")}${this.btn("down", "", "i8")}</div>
          </div>
          <div class="foot"><button class="cur">${icon("log", "i10")}Details</button><button>${icon("peak", "i10")}Summary</button></div>
        </div>
      </section>
      <section>
        ${this.head("Advisories")}
        <div class="frame">
          <div class="tools">${this.set("save", "photo", "book")}</div>
          <div class="adv"><div>${icon("green", "i10")}<span>Override Attribute property Font Color</span></div></div>
        </div>
      </section>
      <section>
        ${this.head("Overview")}
        <div class="frame over"><svg viewBox="0 0 422 66" preserveAspectRatio="xMidYMid slice">${this.overview()}</svg></div>
      </section>
    </div>`;
  }

  private taskbar() {
    const apps: [string, string][] = [
      ["windows", ""], ["taskview", ""], ["edge", ""], ["folder", "run"], ["snip", ""], ["chrome", ""],
      ["word", ""], ["skype", "run"], ["maps", ""], ["cut", ""], ["teams", "run"], ["erwin", "run act"],
    ];
    const tray = ["batt", "spark", "orb", "skype", "bow", "rosette", "teams", "printer", "yellow", "red", "target", "cube", "usb", "greenf", "net", "vol"];
    return html`<footer class="task">
      <div class="apps">${apps.map(([n, c]) => this.btn(n, c, n === "windows" || n === "taskview" ? "i12" : "i16"))}</div>
      <div class="tray">
        ${tray.map((n) => this.btn(n, "", "i12"))}
        <button class="lang">ESP</button>
        <div class="clock">9:48<br />24/05/2023</div>
      </div>
    </footer>`;
  }

  render() {
    return html`
      <header class="title">
        <span></span>
        <span class="txt">erwin DM - [Mod_Mercado.erwin_Copia.erwin : ER_Diagram_129 * ]</span>
        <div class="winbtns">${this.btn("min", "", "i10")}${this.btn("restore", "", "i10")}${this.btn("close", "", "i10")}</div>
      </header>
      <div class="grab">
        <svg width="100" height="14" viewBox="0 0 100 14">
          <path d="M2 4h35M2 9h35M64 4h35M64 9h35" stroke="#ececec" stroke-width="2.500" stroke-dasharray="2.500 3"/>
          <path d="M49 1h3v5h4l-5.500 6L45 6h4z" fill="#eee"/>
        </svg>
      </div>
      <div class="menu"><button aria-label="File"></button></div>
      <div class="band"></div>
      ${this.toolbars()}
      <div class="main">${this.explorer()}${this.center()}${this.props()}</div>
      ${this.bottom()}
      <div class="status">
        <span class="grow">For Help, press F1</span><span class="mart">Non-Mart Model</span><span class="tera">Teradata 15.x/16.x</span>
        <span class="pct">100%</span>
        <div class="zoom"><button>−</button><input type="range" aria-label="Zoom" value="50" /><button>+</button></div>
      </div>
      ${this.taskbar()}
      <svg class="cursor" viewBox="0 0 28 26">
        <circle cx="14" cy="12.500" r="10" fill="none" stroke="#666" stroke-width="2.500"/>
        <circle cx="14" cy="12.500" r="10" fill="none" stroke="#fff" stroke-width="1.500"/>
        <path d="M7 14.500h15M10 11l-3 3.500" stroke="#fff" stroke-width="1.500"/>
        <path d="M3 2v11l3-3 2 5 2-1-2-5h4z" fill="#fff" stroke="#222" stroke-width=".8"/>
      </svg>
    `;
  }
}
